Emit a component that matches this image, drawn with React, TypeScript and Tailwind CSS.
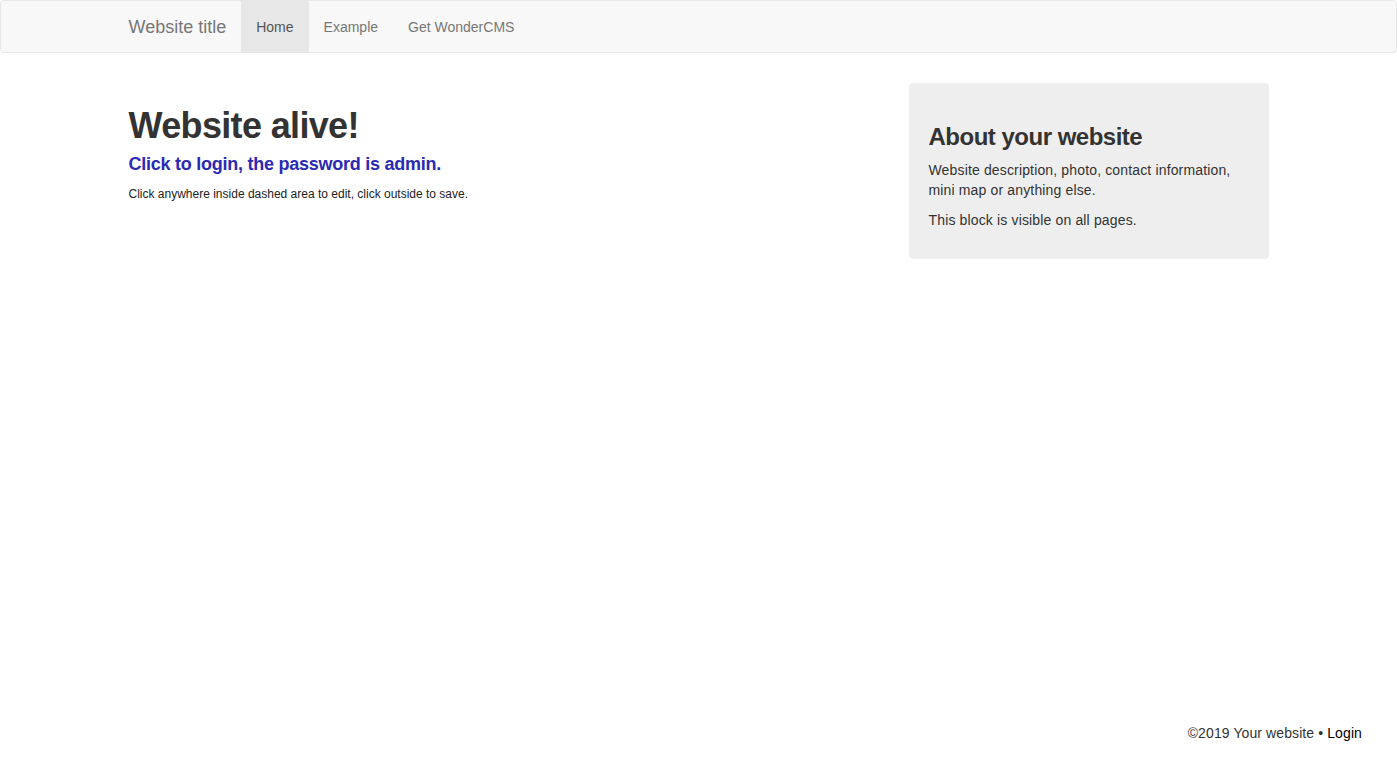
export default function App() {
    return (
        <div
            className="min-h-[763px] flex flex-col bg-white text-[14px] leading-[20px] text-[#333333]"
            style={{ fontFamily: '"Liberation Sans", Arial, sans-serif' }}
        >
            {/* Navbar */}
            <nav className="h-[53px] border border-[#e7e7e7] bg-[#f8f8f8] rounded-[4px]">
                <div className="w-[1170px] mx-auto px-[15px] flex h-[51px]">
                    <a href="#" className="-ml-[15px] px-[15px] h-[51px] flex items-center text-[18px] text-[#777777]">
                        Website title
                    </a>
                    <ul className="flex">
                        <li>
                            <a href="#" className="flex items-center h-[51px] px-[15px] bg-[#e7e7e7] text-[#555555]">
                                Home
                            </a>
                        </li>
                        <li>
                            <a href="#" className="flex items-center h-[51px] px-[15px] text-[#777777]">
                                Example
                            </a>
                        </li>
                        <li>
                            <a href="#" className="flex items-center h-[51px] px-[15px] text-[#777777]">
                                Get WonderCMS
                            </a>
                        </li>
                    </ul>
                </div>
            </nav>

            {/* Content */}
            <div className="w-[1170px] mx-auto px-[15px] flex-1">
                <div className="flex -mx-[15px] mt-[30px]">
                    <div className="w-[780px] px-[15px] pt-[3px]">
                        <h1 className="mt-[20px] mb-[8px] text-[36px] leading-[40px] font-bold tracking-[-0.65px] text-[#333333]">
                            Website alive!
                        </h1>
                        <h4 className="text-[18px] leading-[20px] font-bold tracking-[-0.25px] text-[#2b2ab3]">
                            <a href="#">Click to login, the password is admin.</a>
                        </h4>
                        <p className="mt-[11px] text-[12px] leading-[18px] text-[#222222]">
                            Click anywhere inside dashed area to edit, click outside to save.
                        </p>
                    </div>
                    <div className="w-[390px] px-[15px]">
                        <div className="bg-[#eeeeee] rounded-[4px] px-[19px] pt-[19px] pb-[18px] border border-[#eeeeee] tracking-[0.15px]">
                            <h3 className="mt-[21px] mb-[10px] text-[24px] leading-[26px] font-bold tracking-[-0.5px] text-[#333333]">
                                About your website
                            </h3>
                            <p className="mb-[10px]">
                                Website description, photo, contact information, mini map or anything else.
                            </p>
                            <p className="mb-[10px]">This block is visible on all pages.</p>
                        </div>
                    </div>
                </div>
            </div>

            {/* Footer */}
            <footer className="flex justify-end pr-[35px] pb-[20px] pt-[20px]">
                <p className="tracking-[0.1px]">
                    ©2019 Your website • <a href="#" className="text-black">Login</a>
                </p>
            </footer>
        </div>
    );
}
